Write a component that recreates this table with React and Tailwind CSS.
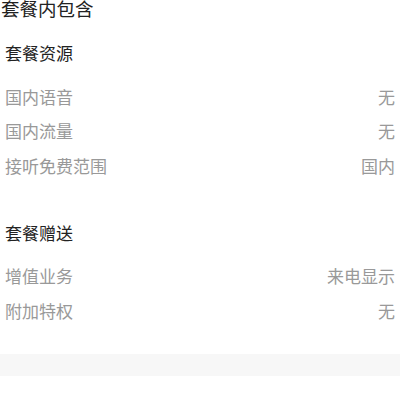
import React from 'react';

const sections = [
  {
    title: '套餐资源',
    gap: 'mt-[20px]',
    items: [
      { label: '国内语音', value: '无' },
      { label: '国内流量', value: '无' },
      { label: '接听免费范围', value: '国内' },
    ],
  },
  {
    title: '套餐赠送',
    gap: 'mt-[33px]',
    items: [
      { label: '增值业务', value: '来电显示' },
      { label: '附加特权', value: '无' },
    ],
  },
];

const App = () => {
  return (
    <div
      className="w-[400px] h-[400px] overflow-hidden bg-white"
      style={{ fontFamily: '"Noto Sans CJK SC", "Noto Sans", sans-serif' }}
    >
      {/* Page title, partly scrolled off */}
      <div className="h-[16px] leading-[16px] text-[18.5px] text-[#222] pl-px">
        套餐内包含
      </div>

      {sections.map((section) => (
        <div key={section.title} className={section.gap}>
          <div className="h-[34px] flex items-center px-[5px] text-[17px] text-[#222]">
            {section.title}
          </div>
          <div className="mt-[9px]">
            {section.items.map((item) => (
              <div
                key={item.label}
                className="h-[34.5px] flex items-center justify-between pl-[5px] pr-[5px] text-[17px] text-[#999]"
              >
                <span>{item.label}</span>
                <span>{item.value}</span>
              </div>
            ))}
          </div>
        </div>
      ))}

      {/* Divider band */}
      <div className="mt-[26px] h-[22px] bg-[#f7f7f7]"></div>
    </div>
  );
};

export default App;
